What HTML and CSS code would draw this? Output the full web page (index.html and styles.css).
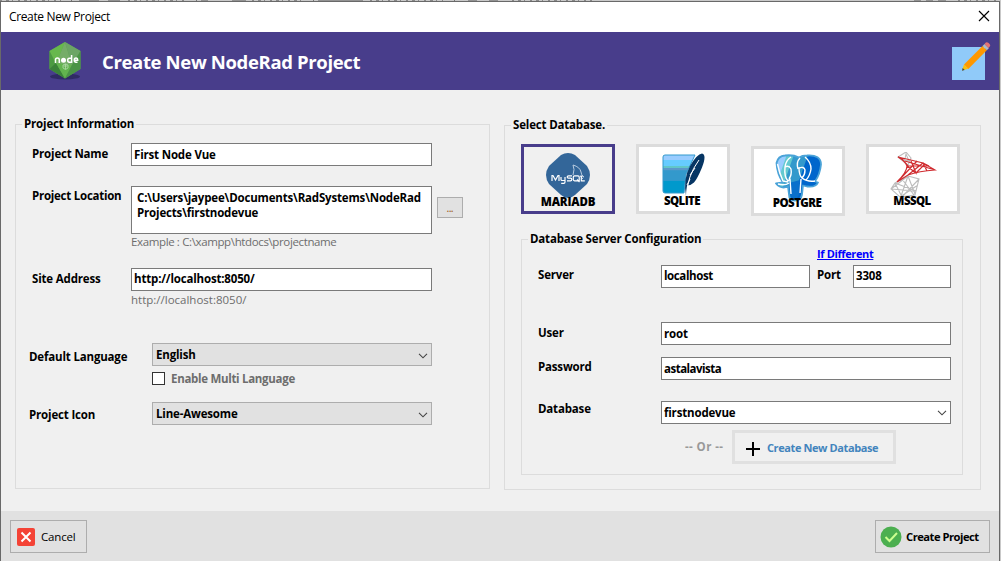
FILE: index.html
```html
<!DOCTYPE html>
<html lang="en">
<head>
<meta charset="utf-8">
<title>Create New Project</title>
<link rel="stylesheet" href="styles.css">
</head>
<body>
<div class="backdrop">
<svg class="toolbar-edge" width="1001" height="1" viewBox="0 0 1001 1"><path d="M0 .5H61M128 .5H184M252 .5H304M370 .5H443M512 .5H592M958 .5H1000" stroke="#888" stroke-dasharray="2 4 3 3 1 5"/><path d="M71 .5h1M196 .5h1M313 .5h1M454 .5h1" stroke="#777"/><path d="M79 .5h20M108 .5h12M201 .5h7M232 .5h14M318 .5h45M468 .5h9M489 .5h9M914 .5h7M926 .5h7M938 .5h8" stroke="#929292"/></svg>
<main class="dialog">
<header class="titlebar"><span class="t-title">Create New Project</span>
<svg width="12" height="12" viewBox="0 0 12 12"><path d="M1 1l10 10M11 1L1 11" stroke="#000" stroke-width="1.15"/></svg></header>
<div class="banner">
<svg class="node-logo" width="34" height="40" viewBox="0 0 34 40">
<ellipse cx="17" cy="35.500" rx="15" ry="3" fill="#302b65"/>
<path d="M17 1L32.500 10V28L17 37.500 1.500 28V10Z" fill="#5b9f50"/><path d="M17 1L1.500 10 8 23Z" fill="#67b84d"/><path d="M17 1L8 23 24 24Z" fill="#75ad68"/><path d="M17 1L32.500 10 24 24Z" fill="#6ca565"/><path d="M1.500 10V28L8 23Z" fill="#4c9a42"/><path d="M1.500 28L8 22 17 37.500Z" fill="#3b8239"/><path d="M8 22L24 24 17 37.500Z" fill="#62b44e"/><path d="M24 24L32.500 10V28L17 37.500Z" fill="#4b9446"/>
<g fill="none" stroke="#fff" stroke-width="1.500"><path d="M7.500 22v-3.200q0-1.800 1.900-1.800t1.900 1.800V22M23.600 14v7.200h-2.200q-1.700 0-1.700-2t1.700-2h2.200M26.300 19.200h3.400q0-2.200-1.700-2.200t-1.700 2.100 1.700 2.200h1.500"/></g><circle cx="15.500" cy="19.300" r="2.500" fill="#fff"/><path d="M15 24l2.500-1 2.500 1v3l-2.500 1.500L15 27zM17.500 23v5M15.500 25h4" fill="none" stroke="#b5d9ac" stroke-width=".8"/></svg>
<h1>Create New NodeRad Project</h1>
<svg class="edit-icon" width="40" height="40" viewBox="0 0 40 40"><path d="M0 6h33v33H0z" fill="#90caf9"/><path d="M12 23.500L30.500 5l4.300 4.300L16.300 28z" fill="#ff9800"/><path d="M30.500 5L32.500 3l4.300 4.300-2 2z" fill="#b0bec5"/><path d="M32.500 3l1.300-1.400q1.200-1 2.500.2l1.300 1.300q1.400 1.400 0 2.700l-1.200 1.300z" fill="#e57373"/><path d="M12 23.500l4.300 4.300L10 29.500z" fill="#ffc107"/><path d="M10.700 27l2 2L10 29.700z" fill="#37474f"/></svg>
</div>
<form class="body">
<fieldset class="project"><legend>Project Information</legend>
<div class="row name"><label>Project Name</label><div class="box field"><span>First Node Vue</span></div></div>
<div class="row location"><label>Project Location</label><div class="box field area"><span>C:\Users\jaypee\Documents\RadSystems\NodeRad</span><span>Projects\firstnodevue</span></div><button type="button" class="browse">...</button></div>
<p class="hint example"><span>Example : C:\xampp\htdocs\projectname</span></p>
<div class="row site"><label>Site Address</label><div class="box field"><span>http://localhost:8050/</span></div></div>
<p class="hint second"><span>http://localhost:8050/</span></p>
<div class="row language"><label>Default Language</label><div class="box select"><span>English</span><svg width="10" height="6" viewBox="0 0 10 6"><path d="M1 .8l4 4 4-4" fill="none" stroke="#444" stroke-width="1.100"/></svg></div></div>
<div class="multi"><i class="check"></i><span>Enable Multi Language</span></div>
<div class="row icon-row"><label>Project Icon</label><div class="box select"><span>Line-Awesome</span><svg width="10" height="6" viewBox="0 0 10 6"><path d="M1 .8l4 4 4-4" fill="none" stroke="#444" stroke-width="1.100"/></svg></div></div>
</fieldset>
<fieldset class="database"><legend>Select Database.</legend>
<div class="cards">
<div class="card selected"><svg width="48" height="48" viewBox="0 0 48 48"><path d="M17 3Q24-1 31 3L43 14Q49 23 43 32L31 43Q24 49 17 43L5 32Q-1 23 5 14Z" fill="#336699"/><path d="M29 23q2-6 0-10 7 2 8 7 0 3 3 5l-4-1 3 3" fill="none" stroke="#b9cce0" stroke-width="1"/><g fill="none" stroke="#fff" stroke-width="1.200"><path d="M8 29v-5.500h1l2.500 4.500 2.500-4.500h1V29M17 25v2.500q0 1 1 1h2.500M21 25v5q0 1.300-1.300 1.300h-2.500M28 23.800h-3.500q-1.300 0-1.300 1.200t1.300 1.200h2q1.300 0 1.300 1.300t-1.300 1.300H23M30.500 23.800h3.500q1.200 0 1.200 1.200v3.800h-4.700q-1.200 0-1.200-1.200V25q0-1.200 1.200-1.200M33 27.500l2.500 2.500M37.300 23.500v5.300h3.500"/></g></svg><b class="t-maria">MARIADB</b></div>
<div class="card"><svg width="48" height="48" viewBox="0 0 48 48"><defs><linearGradient id="sq" x2="0" y2="1"><stop stop-color="#99ccff"/><stop offset=".13" stop-color="#99ccff"/><stop offset=".14" stop-color="#66ccff"/><stop offset=".28" stop-color="#66ccff"/><stop offset=".29" stop-color="#60c7c8"/><stop offset=".34" stop-color="#62c5ca"/><stop offset=".35" stop-color="#5b99ca"/><stop offset=".4" stop-color="#5b99ca"/><stop offset=".41" stop-color="#3399cc"/><stop offset=".67" stop-color="#3399cc"/><stop offset=".68" stop-color="#0099cc"/></linearGradient></defs><path d="M6 3h30L27 22l-2 19H6q-2 0-2-2V5q0-2 2-2z" fill="url(#sq)" stroke="#3399cc"/><path d="M27 44q-3-17 4-30Q38 2 43 1.500q5 1 0 14-5 12-8 15-3 3-7 3z" fill="#063563"/><path d="M27.500 45Q28 24 40 8M31 27l-3 6M36 16l-5 7" fill="none" stroke="#fff" stroke-width="1"/></svg><b class="t-sqlite">SQLITE</b></div>
<div class="card postgre"><svg width="48" height="48" viewBox="0 0 48 48"><defs><linearGradient id="pg" x2="1" y2=".35"><stop stop-color="#99ccff"/><stop offset=".2" stop-color="#99ccff"/><stop offset=".22" stop-color="#63c9cf"/><stop offset=".34" stop-color="#63c9cf"/><stop offset=".36" stop-color="#3399cc"/><stop offset=".62" stop-color="#3399cc"/><stop offset=".64" stop-color="#0066cc"/></linearGradient></defs><g stroke-linejoin="round"><path d="M2.500 9Q4 2 11 1.500q8-1 14 2 3-2 8-2 14-1 14 9-1 10-6 17l3 1q-2 5-11 4l-4-1-1 9q-1 6-7 6-6 0-6-6l-1-8q-7 3-12-3l7-1Q3 20 2.500 9z" fill="url(#pg)" stroke="#4aa3d8" stroke-width="1.800"/><path d="M15 29l11-3-1 14q-1 5-5 5t-4-5z" fill="#0a70cc"/><path d="M17 3q-5 3-6 10-1 10 3 14l2-2 1 15M11 13q4-2 6 2 1 6-2 10M3.500 10Q5 18 9 27l5 1M4 30q7 2 11-1M26 4q-4 4-2 11M25 14q5-2 6 2 0 5-3 8-3-3-3-10zM27 25l-1 14M28 24q5 4 13 3M31 3q6 5 6 12-1 7-5 11" fill="none" stroke="#fff" stroke-width="1.400"/></g></svg><b class="t-post">POSTGRE</b></div>
<div class="card"><svg width="48" height="48" viewBox="0 0 48 48"><g fill="none" stroke="#bdbdbd" stroke-width="1.1"><path d="M9 5l8-5 5 6-3 7zM11 6l9 3-3-7-2 9M6 31l13-7 11 3-4 16-15 2-9-8zM2 37l17-13 7 18M6 31l7 14 17-18M19 24l-7 20M2 37l25 2M6 31l21 8M13 27l12 16M11 45l18-12"/></g><g fill="none" stroke="#d02c30" stroke-width="1.2"><path d="M9 5q13 3 25 6l12 7q-16 1-27 5L8 30Q18 20 18 14q-2-5-9-9zM16 9l30 9M18 14l22 0-6-3M19 23l15-12 4 8M22 9l5 12 9-9M12 26l16-17M18 14l10 8M12 6l7 8"/></g></svg><b class="t-ms">MSSQL</b></div>
</div>
<fieldset class="config"><legend>Database Server Configuration</legend>
<a class="different">If Different</a>
<div class="row server"><label>Server</label><div class="box field"><span class="t-host">localhost</span></div><label class="port">Port</label><div class="box field portbox"><span>3308</span></div></div>
<div class="row user"><label>User</label><div class="box field"><span>root</span></div></div>
<div class="row password"><label>Password</label><div class="box field"><span class="t-asta">astalavista</span></div></div>
<div class="row dbname"><label>Database</label><div class="box field combo"><span>firstnodevue</span><svg width="10" height="6" viewBox="0 0 10 6"><path d="M1 .8l4 4 4-4" fill="none" stroke="#444" stroke-width="1.100"/></svg></div></div>
<div class="create-db"><span class="or">-- Or --</span><button type="button" class="newdb"><svg width="14" height="14" viewBox="0 0 14 14"><path d="M7 0v14M0 7h14" stroke="#000" stroke-width="2"/></svg><span>Create New Database</span></button></div>
</fieldset>
</fieldset>
</form>
<footer class="footer">
<button class="action cancel"><svg width="18" height="18" viewBox="0 0 18 18"><rect width="18" height="18" rx="2" fill="#f44336"/><path d="M4.500 4.500l9 9M13.500 4.500l-9 9" stroke="#fff" stroke-width="2"/></svg><span>Cancel</span></button>
<button class="action submit"><svg width="22" height="22" viewBox="0 0 22 22"><circle cx="11" cy="11" r="10.500" fill="#4caf50"/><path d="M5.500 11l4 4 7.500-8" fill="none" stroke="#ccff90" stroke-width="2"/></svg><span>Create Project</span></button>
</footer>
</main>
</div>
</body>
</html>
```
FILE: styles.css
```css
* { box-sizing: border-box; }
body { margin: 0; font: 700 11.5px/16px "Open Sans", sans-serif; letter-spacing: -.17px; color: #000; }
.backdrop { width: 1001px; height: 561px; background: #c9c9c9; overflow: hidden; display: flex; flex-direction: column; }
.toolbar-edge { display: block; flex: none; }
.dialog { width: 1000px; height: 560px; border: 1px solid #696969; border-bottom: 0; background: #f0f0f0; display: flex; flex-direction: column; }
span, label, legend, b { white-space: nowrap; }
svg { display: block; flex: none; }
button { font: inherit; letter-spacing: inherit; color: inherit; padding: 0; margin: 0; border-radius: 0; }
.titlebar { height: 30px; background: #fff; display: flex; justify-content: space-between; padding: 7px 9px 0 8px; font-size: 12px; font-weight: 400; letter-spacing: -.36px; }
.titlebar svg { margin-top: 1px; }
.banner { height: 58px; background: #483d8b; color: #fff; display: flex; align-items: flex-start; }
.node-logo { margin: 9px 0 0 47px; }
h1 { font: 700 18.5px/26px "Open Sans", sans-serif; letter-spacing: -.35px; white-space: nowrap; margin: 17px auto 0 20px; }
.edit-icon { margin: 9px 7px 0 0; }
.body { height: 421px; display: flex; align-items: flex-start; padding: 26px 0 0 14px; }
fieldset { margin: 0; padding: 0; min-width: 0; border: 1px solid #dcdcdc; }
legend { padding: 0 2px; margin-left: 6px; height: 16px; }
.project { width: 475px; height: 373px; }
.database { width: 477px; height: 373px; margin: 1px 0 0 14px; }
.row { display: flex; align-items: flex-start; }
.box { border: 1px solid #7a7a7a; background: #fff; height: 23px; padding: 3px 0 0 2px; flex: none; }
.project label { width: 99px; margin-left: 16px; flex: none; }
.project .field { width: 301px; }
.name { margin-top: 11px; }
.name label, .site label { margin-top: 3px; }
.location { margin-top: 20px; }
.location label { margin-top: 2px; letter-spacing: -.25px; }
.project .area { height: 48px; padding: 3px 0 0 5px; display: flex; flex-direction: column; line-height: 15px; }
.browse { width: 26px; height: 21px; margin: 11px 0 0 5px; border: 1px solid #adadad; background: #e1e1e1; font-size: 8px; line-height: 21px; color: #a05f28; }
.hint { margin: 0 0 0 115px; height: 16px; font-weight: 400; letter-spacing: 0; color: #6d6d6d; }
.hint.example { letter-spacing: -.37px; }
.site { margin-top: 18px; }
.project .site .field { padding-top: 2px; }
.hint.second { margin-top: 1px; }
.language { margin-top: 35px; }
.project .language label, .project .icon-row label { margin: 5px 0 0 13px; width: 123px; }
.project .language label { margin-top: 6px; }
.select { width: 280px; border-color: #adadad; background: #e1e1e1; display: flex; justify-content: space-between; padding: 3px 3px 0; }
.select svg { margin-top: 6px; }
.combo svg { margin-top: 5px; }
.multi { display: flex; gap: 6px; margin: 5px 0 0 136px; height: 16px; color: #6d6d6d; letter-spacing: -.3px; }
.check { width: 13px; height: 13px; border: 1px solid #333; background: #fff; margin-top: 1px; }
.icon-row { margin-top: 15px; }
.cards { display: flex; gap: 21px; margin: 11px 0 0 16px; height: 72px; }
.card { width: 94px; height: 70px; border: 3px solid #dcdcdc; background: #fff; display: flex; flex-direction: column; align-items: center; padding-top: 5px; }
.card b { margin-top: -7px; position: relative; line-height: 16px; }
.card .t-sqlite, .card .t-ms, .card .t-post { letter-spacing: -.6px; margin-right: 2px; }
.card .t-maria { margin-top: -6px; }
.card.selected { border-color: #483d8b; background: #f0f0f0; }
.postgre { margin-top: 2px; }
.config { width: 442px; height: 244px; margin: 15px 0 0 16px; }
.different { display: block; margin: -1px 0 0 295px; width: 60px; white-space: nowrap; color: #00f; text-decoration: underline; font-size: 11px; letter-spacing: -.37px; }
.config label { width: 123px; margin: 2px 0 0 16px; flex: none; }
.config .field { width: 290px; }
.server { margin-top: 3px; }
.config .server .field { width: 149px; padding-top: 2px; }
.config .server .port { width: 36px; margin-left: 7px; }
.config .server .portbox { width: 98px; }
.t-host { letter-spacing: -.4px; }
.t-asta { letter-spacing: -.5px; }
.user { margin-top: 34px; }
.config .user label { margin-top: 3px; }
.password { margin-top: 12px; }
.dbname { margin-top: 21px; }
.config .dbname label { margin-top: 0; }
.combo { display: flex; justify-content: space-between; padding-right: 3px; }
.create-db { display: flex; margin: 6px 0 0 163px; }
.or { color: #999; width: 47px; margin-top: 9px; letter-spacing: .4px; }
.newdb { width: 164px; height: 34px; border: 3px solid #e0e0e0; background: #f0f0f0; color: #4284bd; display: flex; align-items: center; gap: 7px; padding-left: 11px; font-size: 11px; letter-spacing: -.4px; }
.newdb svg { margin-top: 4px; }
.newdb span { margin-top: 2px; }
.footer { height: 50px; background: #e1e1e1; display: flex; justify-content: space-between; padding: 9px 9px 0; }
.action { height: 33px; border: 1px solid #adadad; background: #e1e1e1; display: flex; align-items: center; }
.cancel { width: 77px; padding-left: 6px; gap: 6px; font-weight: 400; }
.submit { width: 115px; padding-left: 4px; gap: 4px; font-size: 11.2px; letter-spacing: -.5px; }
```
